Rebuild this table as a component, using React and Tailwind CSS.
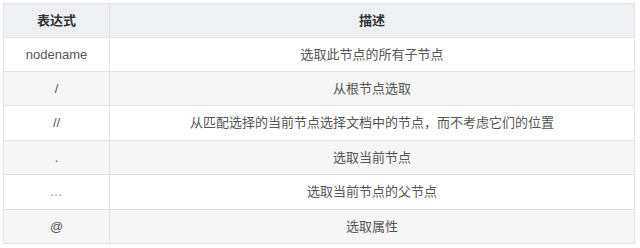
import React from "react";

const rows = [
  { expr: "nodename", desc: "选取此节点的所有子节点", h: "h-[34px]" },
  { expr: "/", desc: "从根节点选取", h: "h-[34px]" },
  { expr: "//", desc: "从匹配选择的当前节点选择文档中的节点，而不考虑它们的位置", h: "h-[35px]" },
  { expr: ".", desc: "选取当前节点", h: "h-[34px]" },
  { expr: "..", desc: "选取当前节点的父节点", h: "h-[35px]" },
  { expr: "@", desc: "选取属性", h: "h-[34px]" },
];

export default function App() {
  return (
    <div
      className="w-[640px] h-[248px] bg-white pt-[3px] pl-[3px] text-[13px] text-[#555]"
      style={{ fontFamily: '"Liberation Sans", "Noto Sans CJK SC", sans-serif' }}
    >
      <table className="w-[632px] border-collapse border border-[#e3e3e3]">
        <thead>
          <tr className="h-[34px] bg-[#eef0f3]">
            <th className="w-[106px] border border-[#e3e3e3] font-bold text-[#333]">表达式</th>
            <th className="border border-[#e3e3e3] font-bold text-[#333]">描述</th>
          </tr>
        </thead>
        <tbody>
          {rows.map((r, i) => (
            <tr key={r.expr} className={`${r.h} ${i % 2 ? "bg-[#f6f6f6]" : "bg-white"}`}>
              <td className="border border-[#e3e3e3] text-center">
                {r.expr === ".." ? <span className="text-[#999] tracking-[1px]">…</span> : r.expr}
              </td>
              <td className="border border-[#e3e3e3] text-center">{r.desc}</td>
            </tr>
          ))}
        </tbody>
      </table>
    </div>
  );
}
